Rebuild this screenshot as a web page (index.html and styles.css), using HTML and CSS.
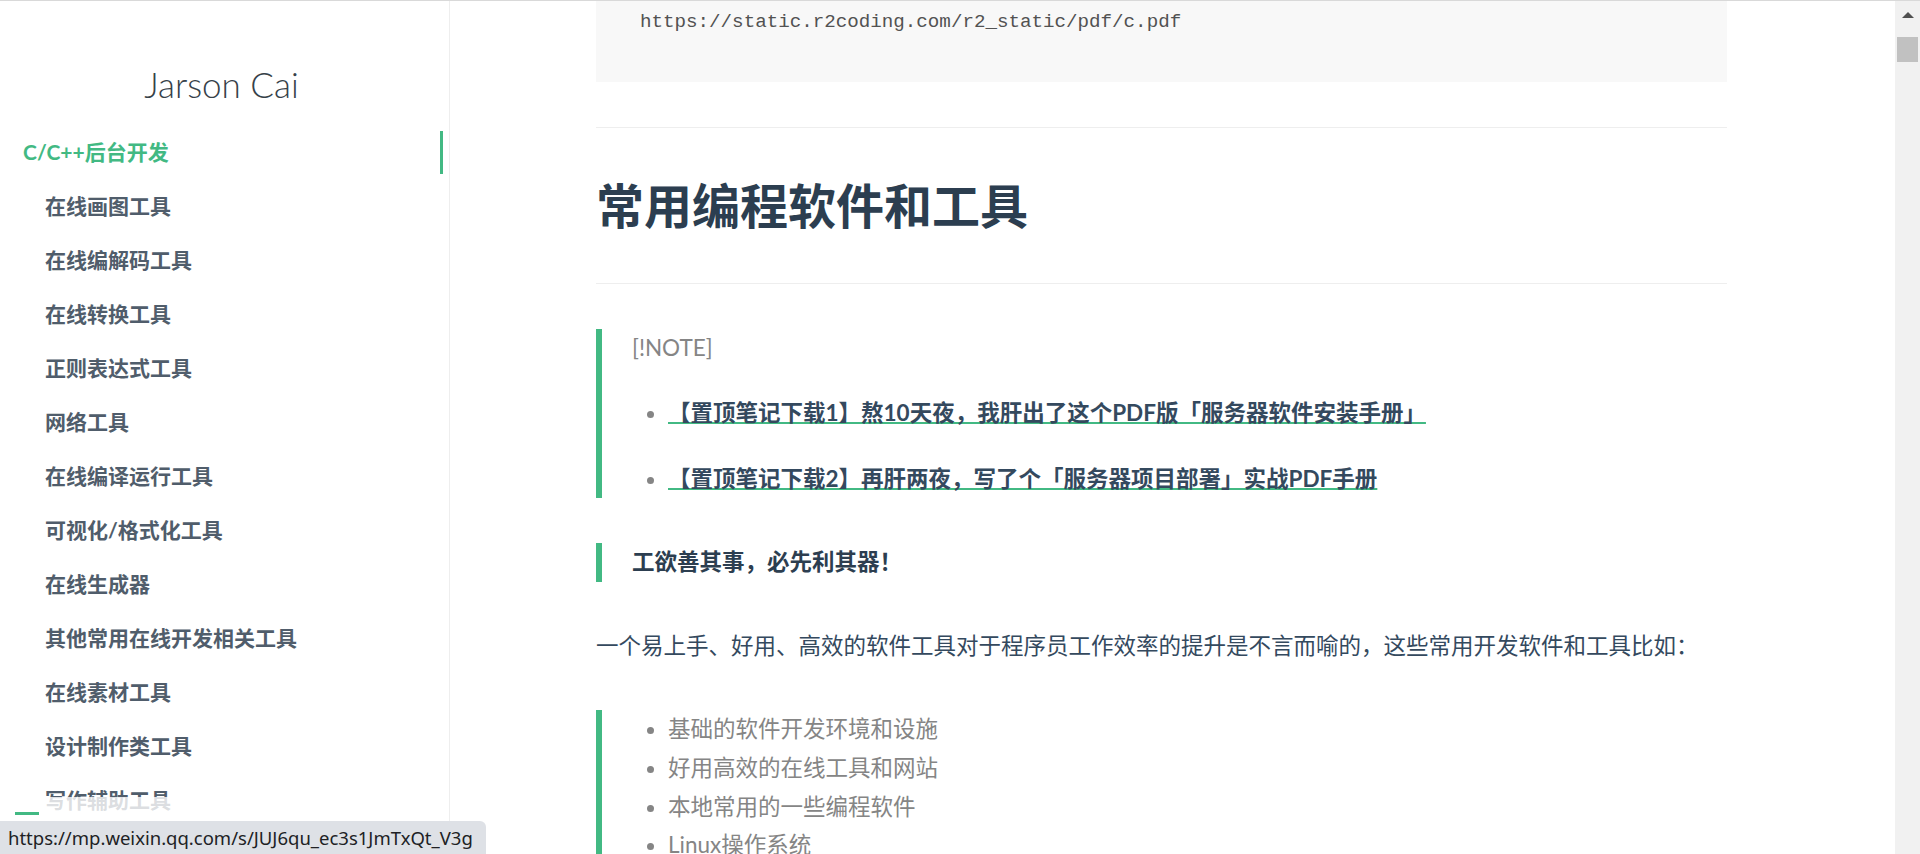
FILE: index.html
```html
<!DOCTYPE html>
<html>
  <head>
    <meta charset="utf-8">
    <title>常用编程软件和工具 - Jarson Cai</title>
    <link rel="stylesheet" href="styles.css">
  </head>
  <body>
    <div class="page">
      <aside class="sidebar">
        <h1 class="app-name">Jarson Cai</h1>
        <ul class="nav">
          <li class="active">
            <a href="#">C/C++后台开发</a>
            <ul class="sub">
              <li><a href="#">在线画图工具</a></li>
              <li><a href="#">在线编解码工具</a></li>
              <li><a href="#">在线转换工具</a></li>
              <li><a href="#">正则表达式工具</a></li>
              <li><a href="#">网络工具</a></li>
              <li><a href="#">在线编译运行工具</a></li>
              <li><a href="#">可视化/格式化工具</a></li>
              <li><a href="#">在线生成器</a></li>
              <li><a href="#">其他常用在线开发相关工具</a></li>
              <li><a href="#">在线素材工具</a></li>
              <li><a href="#">设计制作类工具</a></li>
              <li><a href="#">写作辅助工具</a></li>
            </ul>
          </li>
        </ul>
      </aside>

      <main class="content">
        <article class="markdown">
          <pre><code>https://static.r2coding.com/r2_static/pdf/c.pdf</code></pre>
          <hr>
          <h1>常用编程软件和工具</h1>
          <hr>

          <blockquote>
            <p class="tag">[!NOTE]</p>
            <ul class="links">
              <li><a href="#">【置顶笔记下载1】熬10天夜，我肝出了这个PDF版「服务器软件安装手册」</a></li>
              <li><a href="#">【置顶笔记下载2】再肝两夜，写了个「服务器项目部署」实战PDF手册</a></li>
            </ul>
          </blockquote>

          <blockquote>
            <p><strong>工欲善其事，必先利其器！</strong></p>
          </blockquote>

          <p>一个易上手、好用、高效的软件工具对于程序员工作效率的提升是不言而喻的，这些常用开发软件和工具比如：</p>

          <blockquote>
            <ul class="plain">
              <li>基础的软件开发环境和设施</li>
              <li>好用高效的在线工具和网站</li>
              <li>本地常用的一些编程软件</li>
              <li>Linux操作系统</li>
            </ul>
          </blockquote>
        </article>
      </main>

      <div class="scrollbar">
        <span class="arrow"></span>
        <span class="thumb"></span>
      </div>
    </div>

    <button class="sidebar-toggle"><span></span><span></span><span></span></button>
    <div class="status">https://mp.weixin.qq.com/s/JUJ6qu_ec3s1JmTxQt_V3g</div>
  </body>
</html>
```

FILE: styles.css
```css
body {
  margin: 0;
  height: 854px;
  overflow: hidden;
  border-top: 1px solid #d9d9d9;
  box-sizing: border-box;
  font-family: Lato, "Noto Sans CJK SC", sans-serif;
  font-size: 22.5px;
  color: #34495e;
  background: #fff;
}
a {
  text-decoration: none;
  color: inherit;
}
.page {
  display: flex;
  height: 853px;
}

/* sidebar */
.sidebar {
  width: 450px;
  flex-shrink: 0;
  box-sizing: border-box;
  border-right: 1px solid #eeeeee;
  padding: 62px 6px 0 0;
  color: #364149;
  overflow: hidden;
}
.app-name {
  margin: 0 0 25px;
  font-size: 35px;
  font-weight: 300;
  line-height: 43px;
  text-align: center;
  color: #364149;
}
.nav,
.nav ul {
  list-style: none;
  margin: 0;
  padding: 0;
}
.nav {
  margin-left: 23px;
}
.nav a {
  display: block;
  height: 43px;
  line-height: 42px;
  font-size: 21px;
  font-weight: 700;
  color: #505d6b;
}
.nav .active > a {
  color: #42b983;
  border-right: 3px solid #42b983;
}
.nav .sub {
  padding-left: 22px;
}
.nav .sub li {
  margin-top: 11px;
}

/* content */
.content {
  flex: 1;
  overflow: hidden;
}
.markdown {
  width: 1131px;
  margin-left: 146px;
}
.markdown pre {
  margin: 0;
  background: #f8f8f8;
  padding: 3px 44px 42px;
  font-family: "Liberation Mono", monospace;
  font-size: 19.2px;
  line-height: 36px;
}
.markdown pre code {
  font-family: inherit;
  font-size: inherit;
  line-height: inherit;
  color: #525252;
}
.markdown hr {
  border: none;
  border-bottom: 1px solid #eeeeee;
  margin: 45px 0;
  height: 0;
}
.markdown h1 {
  margin: 0;
  font-size: 48px;
  line-height: 65px;
  font-weight: 700;
  color: #2c3e50;
}
.markdown p {
  margin: 45px 0 0;
  line-height: 38.4px;
}
.markdown blockquote {
  margin: 45px 0 0;
  border-left: 6px solid #42b983;
  padding-left: 30px;
  color: #858585;
}
.markdown blockquote p {
  margin: 0;
}
.markdown blockquote strong {
  color: #2c3e50;
  font-weight: 700;
}
.markdown ul {
  margin: 0;
  padding-left: 36px;
}
.links li {
  margin-top: 27px;
  line-height: 38.4px;
}
.links a {
  color: #34495e;
  font-weight: 700;
  text-decoration: underline 2px #42b983;
  text-underline-offset: 1px;
}
.plain li {
  line-height: 38.8px;
}

/* fake window scrollbar */
.scrollbar {
  width: 25px;
  flex-shrink: 0;
  background: #f1f1f1;
  display: flex;
  flex-direction: column;
  align-items: center;
}
.arrow {
  margin-top: 11px;
  width: 0;
  height: 0;
  border-left: 6px solid transparent;
  border-right: 6px solid transparent;
  border-bottom: 6px solid #505050;
}
.thumb {
  margin-top: 19px;
  width: 21px;
  height: 25px;
  background: #c1c1c1;
}

/* overlays */
.sidebar-toggle {
  position: fixed;
  left: 0;
  bottom: 0;
  width: 426px;
  padding: 15px;
  border: 0;
  background: rgba(255, 255, 255, 0.8);
  text-align: left;
}
.sidebar-toggle span {
  display: block;
  width: 24px;
  height: 3px;
  margin-bottom: 6px;
  background: #42b983;
}
.status {
  position: fixed;
  left: 0;
  bottom: 0;
  width: 486px;
  height: 33px;
  box-sizing: border-box;
  padding-left: 8px;
  line-height: 33px;
  font-family: "Noto Sans", sans-serif;
  font-size: 18.5px;
  color: #202124;
  background: #dee1e6;
  border-top-right-radius: 6px;
  white-space: nowrap;
}
```
